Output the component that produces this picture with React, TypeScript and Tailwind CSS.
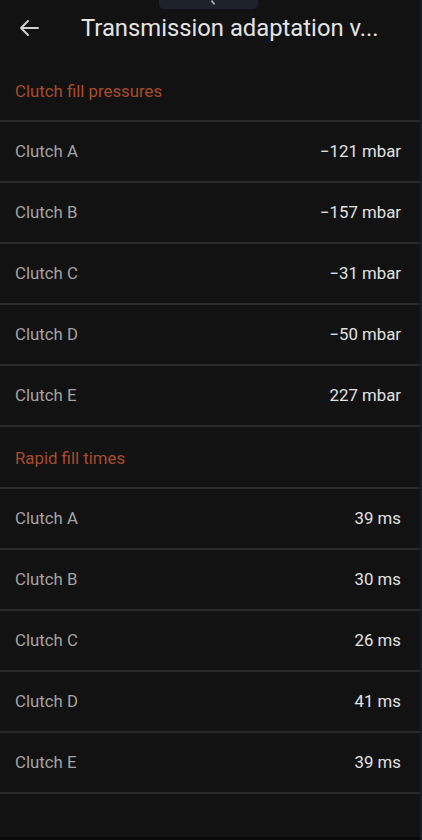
import React from "react";

const pressures = [
  ["Clutch A", "−121 mbar"],
  ["Clutch B", "−157 mbar"],
  ["Clutch C", "−31 mbar"],
  ["Clutch D", "−50 mbar"],
  ["Clutch E", "227 mbar"],
];
const times = [
  ["Clutch A", "39 ms"],
  ["Clutch B", "30 ms"],
  ["Clutch C", "26 ms"],
  ["Clutch D", "41 ms"],
  ["Clutch E", "39 ms"],
];

function Divider() {
  return <div className="h-[2px] bg-[#2a2a2a]" />;
}

function Section({ title }: { title: string }) {
  return (
    <>
      <div className="h-[60px] flex items-center pt-[3px] px-[15px] text-[16.8px] text-[#a84c2b]">{title}</div>
      <Divider />
    </>
  );
}

function Row({ label, value }: { label: string; value: string }) {
  return (
    <>
      <div className="h-[59px] flex items-center justify-between pt-[1px] pl-[15px] pr-[19px] text-[16.8px]">
        <span className="text-[#a3a3a3]">{label}</span>
        <span className="text-[#e2e2e2]">{value}</span>
      </div>
      <Divider />
    </>
  );
}

export default function App() {
  return (
    <div
      className="relative w-[422px] h-[840px] bg-[#121212] flex flex-col border-r-2 border-[#1b1e25] overflow-hidden"
      style={{ fontFamily: "Roboto, 'Noto Sans', sans-serif" }}
    >
      <div className="absolute left-[159px] top-0 w-[99px] h-[9px] bg-[#1e222a] rounded-b-[5px]">
        <div className="absolute left-[53px] top-[0px] w-[2px] h-[5px] bg-[#9aa0aa] rotate-[-40deg]" />
      </div>
      <div className="h-[60px] flex items-center shrink-0">
        <svg width="20" height="18" viewBox="0 0 20 18" className="ml-[19px] mt-[-4px]" fill="none" stroke="#d0d0d0" strokeWidth="2" strokeLinecap="round" strokeLinejoin="round">
          <path d="M19 9H2M9 2L2 9l7 7" />
        </svg>
        <div className="ml-[42px] mt-[-3px] text-[23.8px] text-[#e4e4e4] whitespace-nowrap">
          Transmission adaptation v...
        </div>
      </div>
      <Section title="Clutch fill pressures" />
      {pressures.map(([l, v]) => (
        <Row key={"p" + l} label={l} value={v} />
      ))}
      <Section title="Rapid fill times" />
      {times.map(([l, v]) => (
        <Row key={"t" + l} label={l} value={v} />
      ))}
      <div className="flex-1" />
      <div className="h-[3px] bg-[#0a0a0a]" />
    </div>
  );
}
